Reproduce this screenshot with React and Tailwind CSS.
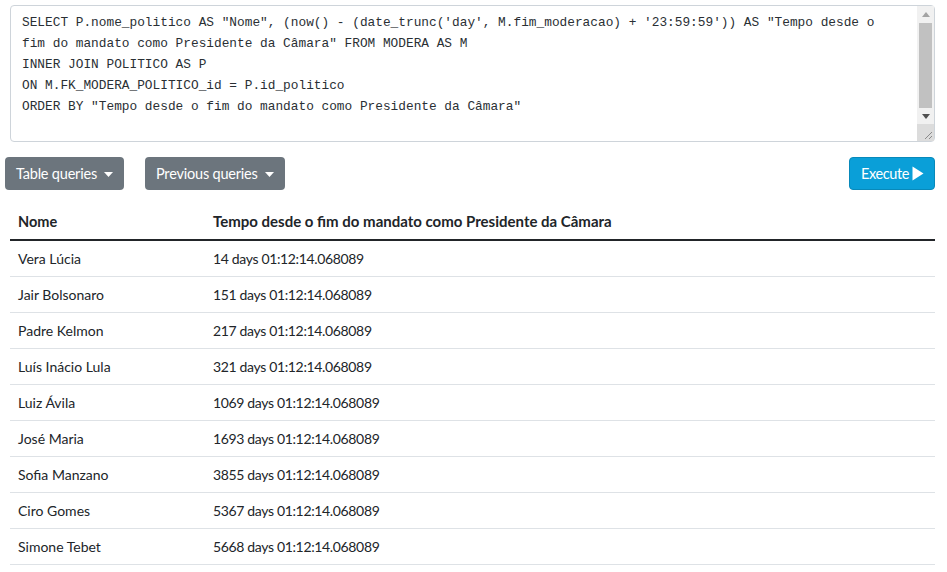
import { useState } from 'react';

const sql = `SELECT P.nome_politico AS "Nome", (now() - (date_trunc('day', M.fim_moderacao) + '23:59:59')) AS "Tempo desde o fim do mandato como Presidente da Câmara" FROM MODERA AS M
INNER JOIN POLITICO AS P
ON M.FK_MODERA_POLITICO_id = P.id_politico
ORDER BY "Tempo desde o fim do mandato como Presidente da Câmara"
`;

const rows = [
  ['Vera Lúcia', '14 days 01:12:14.068089'],
  ['Jair Bolsonaro', '151 days 01:12:14.068089'],
  ['Padre Kelmon', '217 days 01:12:14.068089'],
  ['Luís Inácio Lula', '321 days 01:12:14.068089'],
  ['Luiz Ávila', '1069 days 01:12:14.068089'],
  ['José Maria', '1693 days 01:12:14.068089'],
  ['Sofia Manzano', '3855 days 01:12:14.068089'],
  ['Ciro Gomes', '5367 days 01:12:14.068089'],
  ['Simone Tebet', '5668 days 01:12:14.068089'],
];

function Caret() {
  return (
    <svg width="9" height="5" viewBox="0 0 9 5" className="ml-[7px] mt-[1px]">
      <path d="M0 0 H9 L4.5 5 Z" fill="white" />
    </svg>
  );
}

function DropButton({ label }) {
  return (
    <button className="flex items-center h-[33px] px-[11px] rounded-[4px] bg-[#6c757d] text-white text-[14.5px] tracking-[-0.2px]">
      {label}
      <Caret />
    </button>
  );
}

// fake classic scrollbar drawn over the textarea (the headless browser hides real ones)
function Scrollbar() {
  return (
    <div className="absolute right-[1px] top-[1px] bottom-[1px] w-[17px] flex flex-col bg-[#f1f1f1] pointer-events-none">
      <div className="h-[16px] flex items-center justify-center">
        <svg width="8" height="5" viewBox="0 0 8 5"><path d="M0 5 L4 0 L8 5 Z" fill="#a3a3a3" /></svg>
      </div>
      <div className="mx-[2px] mt-[1px] h-[85px] bg-[#c1c1c1]" />
      <div className="flex-1" />
      <div className="h-[16px] flex items-center justify-center">
        <svg width="8" height="5" viewBox="0 0 8 5"><path d="M0 0 H8 L4 5 Z" fill="#505050" /></svg>
      </div>
      <div className="h-[17px] bg-[#dcdcdc] flex items-end justify-end">
        <svg width="10" height="10" viewBox="0 0 10 10" className="mr-[1px] mb-[1px]">
          <path d="M9 2 L2 9 M9 6 L6 9" stroke="#8a8a8a" strokeWidth="1" />
        </svg>
      </div>
    </div>
  );
}

export default function App() {
  const [query, setQuery] = useState(sql);

  return (
    <div className="pl-[5px] pr-[12px] pt-[5px] font-['Lato','Noto_Sans',sans-serif] text-[#212529]">
      <div className="relative ml-[5px] w-[925px]">
        <textarea
          value={query}
          onChange={(e) => setQuery(e.target.value)}
          className="block w-full h-[137px] border border-[#ced4da] rounded-[4px] pl-[11px] pr-[29px] pt-[6px] font-['Liberation_Mono',monospace] text-[12.8px] leading-[21px] text-[#2a2f34] overflow-y-hidden resize-none outline-none"
          spellCheck={false}
        />
        <Scrollbar />
      </div>

      <div className="flex items-center mt-[15px]">
        <DropButton label="Table queries" />
        <div className="ml-[21px]">
          <DropButton label="Previous queries" />
        </div>
        <button className="ml-auto flex items-center h-[33px] pl-[11px] pr-[10px] rounded-[4px] bg-[#0a9fd8] border border-[#0889ba] text-white text-[14.5px] tracking-[-0.4px]">
          Execute
          <svg width="12" height="15" viewBox="0 0 12 15" className="ml-[3px]">
            <path d="M0.5 0.5 L11.5 7.5 L0.5 14.5 Z" fill="white" />
          </svg>
        </button>
      </div>

      <table className="ml-[5px] mt-[14px] w-[925px] border-collapse text-[14px]">
        <thead>
          <tr className="border-b-2 border-[#222529]">
            <th className="h-[36px] w-[195px] text-left font-bold pl-[8px] align-middle text-[14.5px]">Nome</th>
            <th className="text-left font-bold pl-[8px] align-middle text-[15px]">
              Tempo desde o fim do mandato como Presidente da Câmara
            </th>
          </tr>
        </thead>
        <tbody>
          {rows.map(([nome, tempo]) => (
            <tr key={nome} className="border-b border-[#dee2e6]">
              <td className="h-[36px] pl-[8px] align-middle">{nome}</td>
              <td className="pl-[8px] align-middle tracking-[-0.35px]">{tempo}</td>
            </tr>
          ))}
        </tbody>
      </table>
    </div>
  );
}
